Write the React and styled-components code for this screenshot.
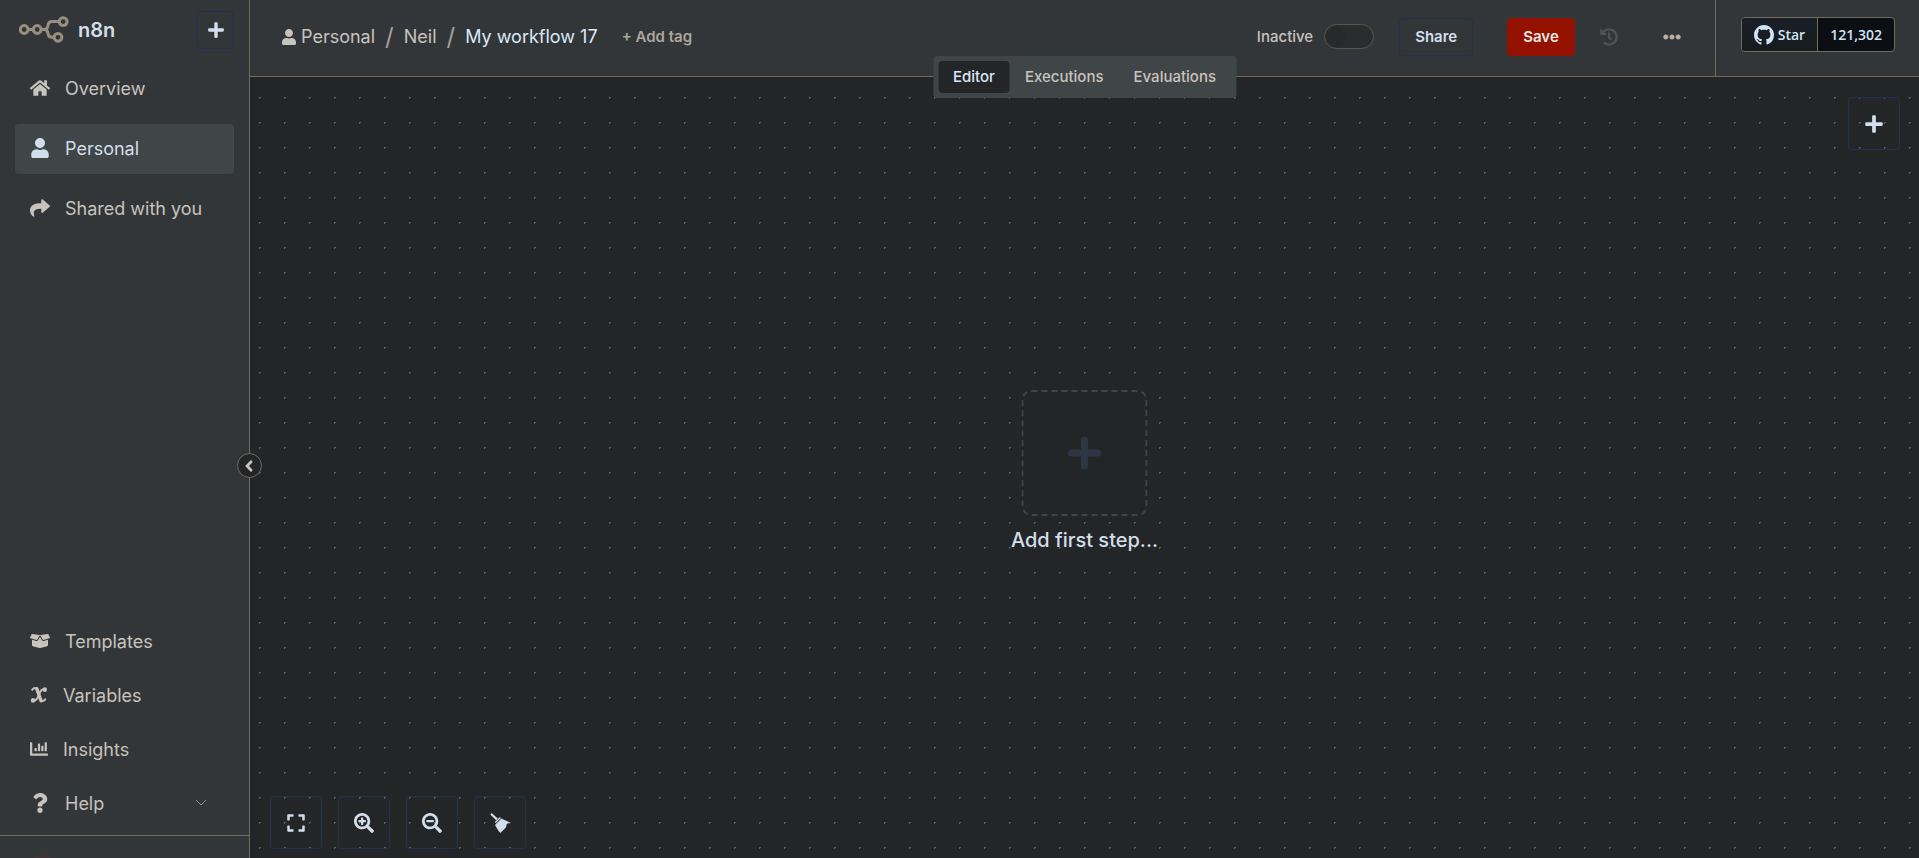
import React, {useState} from 'react';
import styled, {createGlobalStyle, css} from 'styled-components';
import {
    FaAngleLeft,
    FaBoxOpen,
    FaChartBar,
    FaEllipsisH,
    FaExpand,
    FaHistory,
    FaHome,
    FaPlus,
    FaQuestion,
    FaSearchMinus,
    FaSearchPlus,
    FaShare,
    FaUser
} from 'react-icons/fa';

const GlobalStyle = createGlobalStyle`
  :root {
    --color-panel: #333639;
    --color-canvas: #242527;
    --color-raised: #404547;
    --color-line: #736b5e;
    --color-outline: #223152;
    --color-text: #c8c3bc;
    --color-bright: #d2dfeb;
    --radius: 4px;
  }

  * {
    box-sizing: border-box;
  }

  body {
    margin: 0;
    overflow: hidden;
    background-color: var(--color-canvas);
    color: var(--color-text);
    font-family: Inter, "Liberation Sans", sans-serif;
    font-size: 14px;
  }

  button {
    font-family: inherit;
    cursor: pointer;
  }

  a {
    color: inherit;
    text-decoration: none;
  }
`

const Layout = styled.div`
  display: grid;
  grid-template-columns: 250px 1fr;
  height: 100vh;
`

const Sidebar = styled.aside`
  position: relative;
  display: flex;
  flex-direction: column;
  min-height: 0;
  background-color: var(--color-panel);
  border-right: 1px solid var(--color-line);
`

const Brand = styled.div`
  display: flex;
  align-items: center;
  padding: 11px 15px 0 19px;
`

const BrandName = styled.span`
  margin: 0 auto 0 9px;
  color: var(--color-bright);
  font-size: 20px;
  font-weight: 600;
`

const OutlineButton = styled.button`
  display: flex;
  align-items: center;
  justify-content: center;
  width: ${props => props.$large ? 52 : 37}px;
  height: ${props => props.$large ? 53 : 38}px;
  padding: 0;
  background: none;
  border: 1px solid var(--color-outline);
  border-radius: var(--radius);
  color: var(--color-bright);
  font-size: ${props => props.$large ? 20 : 18}px;
`

const Menu = styled.nav`
  display: flex;
  flex-direction: column;
  gap: ${props => props.$gap}px;
  padding: 15px 15px 0;

  &:last-of-type {
    margin-top: auto;
    padding: 0 15px 6px;
  }
`

const MenuItem = styled.a`
  display: flex;
  align-items: center;
  gap: 15px;
  height: 50px;
  padding: 0 27px 2px 15px;
  border-radius: var(--radius);
  color: var(--color-text);
  font-size: 18px;

  > svg:first-child {
    flex: none;
    width: ${props => props.$narrow ? 18 : 20}px;
    height: ${props => props.$narrow ? 18 : 20}px;
  }

  ${props => props.$active && css`
    background-color: var(--color-raised);
    color: var(--color-bright);
  `}
`

const Chevron = styled.svg`
  margin-left: auto;
  color: #8f8b85;
`

const UserArea = styled.div`
  flex: none;
  height: 23px;
  padding: 19px 24px 0;
  overflow: hidden;
  border-top: 1px solid var(--color-line);
`

const Avatar = styled.div`
  width: 35px;
  height: 35px;
  background-color: #423436;
  border-radius: 50%;
`

const CollapseButton = styled.button`
  position: absolute;
  top: 453px;
  right: -13px;
  z-index: 2;
  display: flex;
  align-items: center;
  justify-content: center;
  width: 25px;
  height: 25px;
  padding: 0 2px 0 0;
  background-color: var(--color-canvas);
  border: 1px solid var(--color-line);
  border-radius: 50%;
  color: var(--color-text);
  font-size: 18px;
`

const Main = styled.main`
  position: relative;
  display: flex;
  flex-direction: column;
  min-width: 0;
`

const Header = styled.header`
  display: flex;
  flex: none;
  height: 77px;
  background-color: var(--color-panel);
  border-bottom: 1px solid var(--color-line);
`

const Toolbar = styled.div`
  display: flex;
  flex: 1;
  align-items: center;
  justify-content: space-between;
  padding: 0 34px 3px 32px;
`

const Breadcrumbs = styled.div`
  display: flex;
  align-items: center;
  gap: 10px;
  font-size: 18px;
`

const Crumb = styled.a`
  display: flex;
  align-items: center;
  gap: 5px;
  color: ${props => props.$current ? '#dce8f8' : 'var(--color-text)'};

  svg {
    width: 14px;
    height: 16px;
  }
`

const Slash = styled.span`
  color: #a89f92;
  font-size: 24px;
`

const TagButton = styled.button`
  margin-left: 14px;
  padding: 0;
  background: none;
  border: 0;
  color: #aca69d;
  font-size: 15px;
  font-weight: 600;
`

const Actions = styled.div`
  display: flex;
  align-items: center;
`

const ToggleLabel = styled.label`
  display: flex;
  align-items: center;
  gap: 11px;
  margin-right: 25px;
  font-size: 15px;
  font-weight: 500;
`

const Toggle = styled.input`
  appearance: none;
  display: flex;
  align-items: center;
  width: 50px;
  height: 25px;
  margin: 0;
  padding: 0 1px;
  background-color: #2a2d2e;
  border: 1px solid #5b564e;
  border-radius: 13px;

  &::before {
    content: '';
    width: 20px;
    height: 20px;
    background-color: #262a2a;
    border-radius: 50%;
  }

  &:checked {
    justify-content: flex-end;
  }
`

const ActionButton = styled.button`
  height: 38px;
  padding: 0 15px;
  background-color: ${props => props.$primary ? '#941100' : 'transparent'};
  border: 1px solid ${props => props.$primary ? '#941100' : 'var(--color-outline)'};
  border-radius: var(--radius);
  color: ${props => props.$primary ? '#e8e6e3' : 'var(--color-bright)'};
  font-size: 15px;
  font-weight: 600;

  & + & {
    margin-left: 34px;
  }
`

const IconButton = styled.button`
  display: flex;
  margin-left: ${props => props.$gap}px;
  padding: 0;
  background: none;
  border: 0;
  color: #b8afa3;
  font-size: 18px;

  &:disabled {
    color: #505356;
  }
`

const GithubPanel = styled.div`
  padding: 17px 24px 0 25px;
  border-left: 1px solid var(--color-line);
`

const GithubButton = styled.div`
  display: flex;
  height: 35px;
  overflow: hidden;
  background-color: #0b0e13;
  border: 1px solid var(--color-line);
  border-radius: var(--radius);
  color: #d1e4f5;
  font-family: "Open Sans", "Noto Sans", sans-serif;
  font-size: 14px;
  font-weight: 600;
`

const GithubLink = styled.a`
  display: flex;
  align-items: center;
  gap: 4px;
  padding: 0 12px;

  &:first-child {
    background-image: linear-gradient(#1b2028, #161b1e);
    border-right: 1px solid var(--color-line);
  }
`

const Tabs = styled.div`
  position: absolute;
  top: 56px;
  left: 50%;
  z-index: 1;
  display: flex;
  padding: 5px;
  background-color: var(--color-raised);
  border-radius: var(--radius);
  transform: translateX(-50%);
`

const Tab = styled.button`
  height: 32px;
  padding: 0 15px 1px;
  background-color: ${props => props.$active ? 'var(--color-canvas)' : 'transparent'};
  border: 0;
  border-radius: var(--radius);
  color: ${props => props.$active ? '#dce8f8' : 'var(--color-text)'};
  font-size: 15px;
  font-weight: 500;
`

const Canvas = styled.section`
  position: relative;
  flex: 1;
  min-height: 0;
  background-color: var(--color-canvas);
  background-image: radial-gradient(circle at 50% 50%, #5c5d5f 0, #5c5d5f 1px, transparent 1px);
  background-position: -3px 8px;
  background-size: 25px 25px;
`

const FirstStep = styled.div`
  position: absolute;
  top: 313px;
  left: 50%;
  display: flex;
  flex-direction: column;
  align-items: center;
  gap: 11px;
  color: var(--color-bright);
  font-size: 20px;
  font-weight: 500;
  line-height: 26px;
  transform: translateX(-50%);
`

const StepButton = styled.button`
  display: flex;
  padding: 0;
  background-color: var(--color-canvas);
  border: 0;
  border-radius: 8px;
`

const CanvasCorner = styled.div`
  position: absolute;
  top: 20px;
  right: 19px;
`

const CanvasControls = styled.div`
  position: absolute;
  bottom: 9px;
  left: 20px;
  display: flex;
  gap: 16px;
`

const Logo = () => (
    <svg width="50" height="28" viewBox="0 0 50 28" fill="none" stroke="#988f81" strokeWidth="3">
        <circle cx="5.2" cy="13.5" r="3.9"/>
        <circle cx="18.2" cy="13.5" r="3.9"/>
        <circle cx="44.2" cy="5.6" r="3.9"/>
        <circle cx="39" cy="21.3" r="3.9"/>
        <path d="M9 13.5h5.2M22 13.5h3.5c2.400 0 3-1.400 3.400-3.700.4-2.500 1.500-4.200 4-4.200h7.200M25.500 13.500c2.400 0 3 1.300 3.400 3.700.4 2.600 1.500 4.100 4 4.100h2"/>
    </svg>
)

const VariableIcon = () => (
    <svg viewBox="0 0 18 18" fill="none" stroke="currentColor" strokeLinecap="round">
        <path d="M2.2 3.8C4 1.300 6.500 1.300 7.600 4.300l2.600 8.600c.9 2.800 3.200 2.900 5 .5" strokeWidth="2"/>
        <path d="M6.8 2.800 11 14.800" strokeWidth="3.4"/>
        <path d="M14.8 3.2c-3.200-.7-4.600 2.200-5.900 5.600-1.300 3.600-2.800 6.700-6.100 6" strokeWidth="2"/>
        <path d="M14.8 3.400v.4M3 14.200v.4" strokeWidth="4.4"/>
    </svg>
)

const BroomIcon = () => (
    <svg width="20" height="20" viewBox="0 0 20 20" fill="currentColor">
        <path d="M.3 1.4 1.7 0l6 5.6-1.600 1.700zM4.800 9l5.100-5.100 1 1L5.800 10z"/>
        <path d="m6.4 10.6 5.100-5.100 2 .9 6.500 3.200-3.200 1.300-.9 3.500-5.600 5.600-1.900-2.300L5 12z"/>
    </svg>
)

const GithubIcon = () => (
    <svg width="20" height="20" viewBox="0 0 16 16" fill="currentColor">
        <path d="M8 0C3.58 0 0 3.58 0 8c0 3.54 2.29 6.53 5.47 7.59.4.07.55-.17.55-.38 0-.19-.01-.82-.01-1.49-2.01.37-2.53-.49-2.69-.94-.09-.23-.48-.94-.82-1.13-.28-.15-.68-.52-.01-.53.63-.01 1.08.58 1.23.82.72 1.21 1.87.87 2.33.66.07-.52.28-.87.51-1.07-1.78-.2-3.64-.89-3.64-3.95 0-.87.31-1.59.82-2.15-.08-.2-.36-1.02.08-2.12 0 0 .67-.21 2.2.82.64-.18 1.32-.27 2-.27.68 0 1.36.09 2 .27 1.53-1.04 2.2-.82 2.2-.82.44 1.1.16 1.92.08 2.12.51.56.82 1.27.82 2.15 0 3.07-1.87 3.75-3.65 3.95.29.25.54.73.54 1.48 0 1.07-.01 1.93-.01 2.2 0 .21.15.46.55.38A8.01 8.01 0 0 0 16 8c0-4.42-3.58-8-8-8z"/>
    </svg>
)

const tabs = ['Editor', 'Executions', 'Evaluations']

const App = () => {

    const [tab, setTab] = useState('Editor')
    const [active, setActive] = useState(false)

    return (
        <>
            <GlobalStyle/>
            <Layout>
                <Sidebar>
                    <Brand>
                        <Logo/>
                        <BrandName>n8n</BrandName>
                        <OutlineButton aria-label="Add"><FaPlus/></OutlineButton>
                    </Brand>
                    <Menu $gap={10}>
                        <MenuItem href="#overview"><FaHome/>Overview</MenuItem>
                        <MenuItem href="#personal" $active><FaUser/>Personal</MenuItem>
                        <MenuItem href="#shared"><FaShare/>Shared with you</MenuItem>
                    </Menu>
                    <Menu $gap={4}>
                        <MenuItem href="#templates"><FaBoxOpen/>Templates</MenuItem>
                        <MenuItem href="#variables" $narrow><VariableIcon/>Variables</MenuItem>
                        <MenuItem href="#insights" $narrow><FaChartBar/>Insights</MenuItem>
                        <MenuItem href="#help">
                            <FaQuestion/>Help
                            <Chevron width="12" height="8" viewBox="0 0 12 8" fill="none" stroke="currentColor">
                                <path d="m1 1 5 5 5-5"/>
                            </Chevron>
                        </MenuItem>
                    </Menu>
                    <UserArea>
                        <Avatar/>
                    </UserArea>
                    <CollapseButton aria-label="Collapse"><FaAngleLeft/></CollapseButton>
                </Sidebar>

                <Main>
                    <Header>
                        <Toolbar>
                            <Breadcrumbs>
                                <Crumb href="#personal"><FaUser/>Personal</Crumb>
                                <Slash>/</Slash>
                                <Crumb href="#neil">Neil</Crumb>
                                <Slash>/</Slash>
                                <Crumb href="#workflow" $current>My workflow 17</Crumb>
                                <TagButton>+ Add tag</TagButton>
                            </Breadcrumbs>
                            <Actions>
                                <ToggleLabel>
                                    Inactive
                                    <Toggle
                                        type="checkbox"
                                        checked={active}
                                        onChange={e => setActive(e.target.checked)}
                                    />
                                </ToggleLabel>
                                <ActionButton>Share</ActionButton>
                                <ActionButton $primary>Save</ActionButton>
                                <IconButton $gap={25} disabled aria-label="History"><FaHistory/></IconButton>
                                <IconButton $gap={45} aria-label="More"><FaEllipsisH/></IconButton>
                            </Actions>
                        </Toolbar>
                        <GithubPanel>
                            <GithubButton>
                                <GithubLink href="#star"><GithubIcon/>Star</GithubLink>
                                <GithubLink href="#stargazers">121,302</GithubLink>
                            </GithubButton>
                        </GithubPanel>
                    </Header>
                    <Tabs>
                        {tabs.map(t => <Tab key={t} $active={t === tab} onClick={() => setTab(t)}>{t}</Tab>)}
                    </Tabs>
                    <Canvas>
                        <CanvasCorner>
                            <OutlineButton $large aria-label="Add node"><FaPlus/></OutlineButton>
                        </CanvasCorner>
                        <FirstStep>
                            <StepButton aria-label="Add first step">
                                <svg width="126" height="126" viewBox="0 0 126 126" fill="none">
                                    <rect
                                        x="1" y="1" width="124" height="124" rx="9"
                                        stroke="#404547" strokeWidth="2" strokeDasharray="6 4"
                                    />
                                    <path
                                        d="M63 50v26M50 63h26"
                                        stroke="#2e3545" strokeWidth="7" strokeLinecap="round"
                                    />
                                </svg>
                            </StepButton>
                            Add first step...
                        </FirstStep>
                        <CanvasControls>
                            <OutlineButton $large aria-label="Fit view"><FaExpand/></OutlineButton>
                            <OutlineButton $large aria-label="Zoom in"><FaSearchPlus/></OutlineButton>
                            <OutlineButton $large aria-label="Zoom out"><FaSearchMinus/></OutlineButton>
                            <OutlineButton $large aria-label="Tidy up"><BroomIcon/></OutlineButton>
                        </CanvasControls>
                    </Canvas>
                </Main>
            </Layout>
        </>
    );
};

export default App;
